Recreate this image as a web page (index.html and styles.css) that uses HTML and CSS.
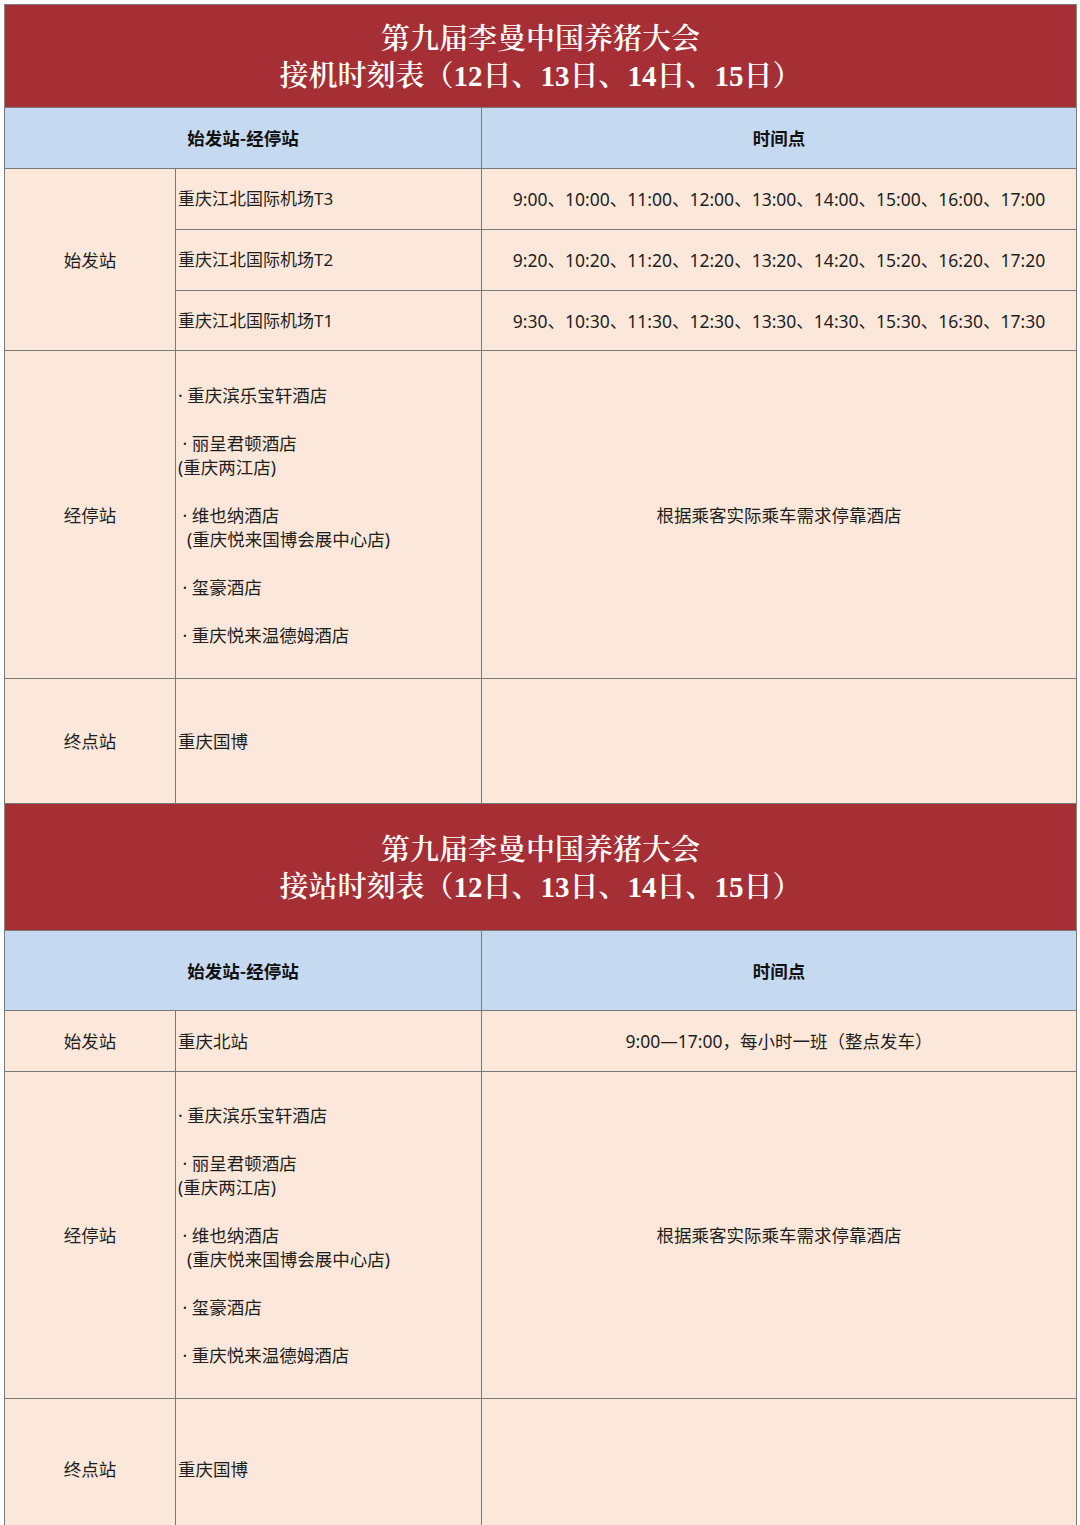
FILE: index.html
```html
<!DOCTYPE html>
<html lang="zh-CN">
<head>
<meta charset="utf-8">
<title>第九届李曼中国养猪大会 接机/接站时刻表</title>
<link rel="stylesheet" href="styles.css">
</head>
<body>
<table class="sched">
  <colgroup>
    <col class="c1"><col class="c2"><col class="c3">
  </colgroup>
  <tr class="r-title">
    <td colspan="3" class="title">第九届李曼中国养猪大会<br>接机时刻表（<b>12</b>日、<b>13</b>日、<b>14</b>日、<b>15</b>日）</td>
  </tr>
  <tr class="r-head">
    <th colspan="2">始发站-经停站</th>
    <th>时间点</th>
  </tr>
  <tr class="r-61">
    <td rowspan="3" class="lab">始发站</td>
    <td class="st air">重庆江北国际机场T3</td>
    <td class="tm">9:00、10:00、11:00、12:00、13:00、14:00、15:00、16:00、17:00</td>
  </tr>
  <tr class="r-61">
    <td class="st air">重庆江北国际机场T2</td>
    <td class="tm">9:20、10:20、11:20、12:20、13:20、14:20、15:20、16:20、17:20</td>
  </tr>
  <tr class="r-60">
    <td class="st air">重庆江北国际机场T1</td>
    <td class="tm">9:30、10:30、11:30、12:30、13:30、14:30、15:30、16:30、17:30</td>
  </tr>
  <tr class="r-stops">
    <td class="lab">经停站</td>
    <td class="st">
      <p>· 重庆滨乐宝轩酒店</p>
      <p> · 丽呈君顿酒店<br>(重庆两江店)</p>
      <p> · 维也纳酒店<br>  (重庆悦来国博会展中心店)</p>
      <p> · 玺豪酒店</p>
      <p> · 重庆悦来温德姆酒店</p>
    </td>
    <td class="tm">根据乘客实际乘车需求停靠酒店</td>
  </tr>
  <tr class="r-end">
    <td class="lab">终点站</td>
    <td class="st">重庆国博</td>
    <td class="tm"></td>
  </tr>

  <tr class="r-title2">
    <td colspan="3" class="title">第九届李曼中国养猪大会<br>接站时刻表（<b>12</b>日、<b>13</b>日、<b>14</b>日、<b>15</b>日）</td>
  </tr>
  <tr class="r-head2">
    <th colspan="2">始发站-经停站</th>
    <th>时间点</th>
  </tr>
  <tr class="r-61">
    <td class="lab">始发站</td>
    <td class="st">重庆北站</td>
    <td class="tm">9:00—17:00，每小时一班（整点发车）</td>
  </tr>
  <tr class="r-stops2">
    <td class="lab">经停站</td>
    <td class="st">
      <p>· 重庆滨乐宝轩酒店</p>
      <p> · 丽呈君顿酒店<br>(重庆两江店)</p>
      <p> · 维也纳酒店<br>  (重庆悦来国博会展中心店)</p>
      <p> · 玺豪酒店</p>
      <p> · 重庆悦来温德姆酒店</p>
    </td>
    <td class="tm">根据乘客实际乘车需求停靠酒店</td>
  </tr>
  <tr class="r-end2">
    <td class="lab">终点站</td>
    <td class="st">重庆国博</td>
    <td class="tm"></td>
  </tr>
</table>
</body>
</html>
```
FILE: styles.css
```css
html, body {
  margin: 0;
  padding: 0;
  background: #ffffff;
}
body {
  padding: 4px 0 0 4px;
  font-family: "Noto Sans", "Noto Sans CJK SC", sans-serif;
  color: #1e1e1e;
}
.sched {
  border-collapse: collapse;
  table-layout: fixed;
  width: 1072px;
  background: #fce8da;
  font-size: 17.5px;
}
.c1 { width: 171px; }
.c2 { width: 306px; }
.c3 { width: 595px; }

.sched td, .sched th {
  border: 1px solid #7a7a7a;
  padding: 0;
  vertical-align: middle;
  line-height: 24px;
}
.sched td.title {
  background: #a52f35;
  color: #ffffff;
  text-align: center;
  font-family: "Noto Serif CJK SC", "Liberation Serif", "Noto Sans CJK SC", serif;
  font-size: 29px;
  line-height: 37px;
  font-weight: 600;
  border-left-color: #888888;
  border-right-color: #888888;
}
.title b { font-weight: bold; font-family: "Liberation Serif", serif; }
.sched th {
  background: #c5d9f0;
  font-family: "Noto Sans CJK SC", sans-serif;
  font-weight: bold;
  font-size: 17.5px;
  text-align: center;
  color: #111111;
}
.r-title { height: 103px; }
.r-head { height: 61px; }
.r-61 { height: 61px; }
.r-60 { height: 60px; }
.r-stops { height: 328px; }
.r-end { height: 125px; }
.r-title2 { height: 127px; }
.r-head2 { height: 80px; }
.r-stops2 { height: 327px; }
.r-end2 { height: 140px; }

.lab {
  text-align: center;
}
.sched td.st {
  text-align: left;
  padding-left: 2px;
  white-space: nowrap;
}
.sched td.air {
  font-size: 17px;
}
.tm {
  text-align: center;
}
.st p {
  margin: 0 0 24px 0;
  white-space: pre;
}
.st p:last-child { margin-bottom: 0; }
```
